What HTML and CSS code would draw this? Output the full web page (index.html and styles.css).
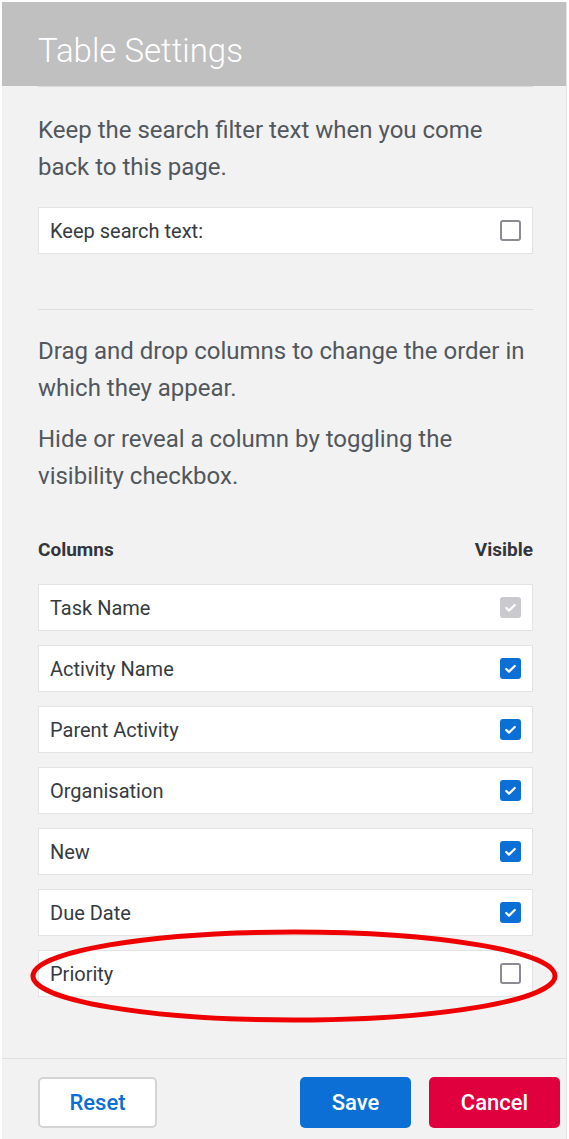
FILE: index.html
```html
<!DOCTYPE html>
<html lang="en">
<head>
<meta charset="utf-8">
<title>Table Settings</title>
<link rel="stylesheet" href="styles.css">
</head>
<body>
<div class="panel">
  <header class="header"><h1 class="title">Table Settings</h1></header>
  <main class="content">
    <hr class="rule rule-top">
    <p class="note first">Keep the search filter text when you come back to this page.</p>
    <div class="row keep">
      <span class="label">Keep search text:</span>
      <span class="cb"></span>
    </div>
    <hr class="rule rule-mid">
    <p class="note second">Drag and drop columns to change the order in which they appear.</p>
    <p class="note third">Hide or reveal a column by toggling the visibility checkbox.</p>
    <div class="colhead"><span>Columns</span><span>Visible</span></div>
    <div class="list">
      <div class="row"><span class="label">Task Name</span><span class="cb disabled"><svg viewBox="0 0 20 20"><path d="M5 10.5l3.2 3.2L15 7" /></svg></span></div>
      <div class="row"><span class="label">Activity Name</span><span class="cb checked"><svg viewBox="0 0 20 20"><path d="M5 10.5l3.2 3.2L15 7" /></svg></span></div>
      <div class="row"><span class="label">Parent Activity</span><span class="cb checked"><svg viewBox="0 0 20 20"><path d="M5 10.5l3.2 3.2L15 7" /></svg></span></div>
      <div class="row"><span class="label">Organisation</span><span class="cb checked"><svg viewBox="0 0 20 20"><path d="M5 10.5l3.2 3.2L15 7" /></svg></span></div>
      <div class="row"><span class="label">New</span><span class="cb checked"><svg viewBox="0 0 20 20"><path d="M5 10.5l3.2 3.2L15 7" /></svg></span></div>
      <div class="row"><span class="label">Due Date</span><span class="cb checked"><svg viewBox="0 0 20 20"><path d="M5 10.5l3.2 3.2L15 7" /></svg></span></div>
      <div class="row"><span class="label">Priority</span><span class="cb"></span></div>
    </div>
  </main>
  <footer class="footer">
    <button class="btn reset">Reset</button>
    <div class="spacer"></div>
    <button class="btn save">Save</button>
    <button class="btn cancel">Cancel</button>
  </footer>
  <svg class="ring" viewBox="0 0 530 96" width="530" height="96"><ellipse cx="265" cy="48" rx="261" ry="44" /></svg>
</div>
</body>
</html>
```
FILE: styles.css
```css
* { box-sizing: border-box; }
html, body { margin: 0; padding: 0; background: #ffffff; }
body { font-family: Roboto, "Liberation Sans", Arial, sans-serif; }

.panel {
  position: relative;
  margin: 2px 2px 0 2px;
  width: 565px;
  height: 1137px;
  background: #f2f2f2;
  border-right: 1px solid #e4e4e4;
  display: flex;
  flex-direction: column;
}

.header {
  height: 84px;
  background: #c0c0c0;
  padding: 12px 0 0 36px;
  display: flex;
  align-items: center;
}
.title {
  margin: 0;
  font-weight: 300;
  font-size: 33px;
  color: #ffffff;
}

.content {
  flex: 1;
  padding: 0 33px 0 36px;
}
.rule { border: 0; margin: 0; height: 1px; }
.rule-top { background: #dadada; }
.rule-mid { background: #dedede; margin-top: 55px; }

.note {
  margin: 0;
  font-size: 24px;
  line-height: 36.5px;
  color: #51575d;
  font-weight: 400;
}
.note.first { margin-top: 25px; }
.note.second { margin-top: 23px; }
.note.third { margin-top: 15px; }

.row {
  height: 47px;
  background: #ffffff;
  border: 1px solid #e3e3e3;
  display: flex;
  align-items: center;
  justify-content: space-between;
  padding: 0 11px 0 11px;
}
.row.keep { margin-top: 22px; }
.label {
  font-size: 20px;
  color: #363b40;
}

.cb {
  width: 21px;
  height: 21px;
  border: 2px solid #8b8b94;
  border-radius: 3px;
  background: #ffffff;
  display: flex;
  align-items: center;
  justify-content: center;
}
.cb svg { width: 19px; height: 19px; fill: none; stroke: #ffffff; stroke-width: 2.6; stroke-linecap: round; stroke-linejoin: round; }
.cb.checked { background: #0b6fd6; border-color: #0b6fd6; }
.cb.disabled { background: #c9c9ce; border-color: #c9c9ce; }

.colhead {
  margin-top: 45px;
  display: flex;
  justify-content: space-between;
  font-size: 19px;
  line-height: 22px;
  font-weight: 700;
  color: #32363a;
}
.list {
  margin-top: 23px;
  display: flex;
  flex-direction: column;
  gap: 14px;
}

.footer {
  height: 81px;
  border-top: 1px solid #e0e0e0;
  display: flex;
  align-items: flex-start;
  padding: 18px 6px 0 36px;
  gap: 18px;
}
.spacer { flex: 1; }
.btn {
  height: 51px;
  border-radius: 5px;
  font-family: Roboto, "Liberation Sans", Arial, sans-serif;
  font-size: 22px;
  font-weight: 500;
  border: 0;
  padding: 0;
}
.btn.reset {
  width: 119px;
  background: #ffffff;
  border: 2px solid #d4d4d4;
  color: #0b6fd6;
}
.btn.save { width: 111px; background: #0b6fd6; color: #ffffff; }
.btn.cancel { width: 131px; background: #e0003d; color: #ffffff; }

.ring {
  position: absolute;
  left: 27px;
  top: 926px;
  overflow: visible;
}
.ring ellipse { fill: none; stroke: #ee0000; stroke-width: 5; }
```
